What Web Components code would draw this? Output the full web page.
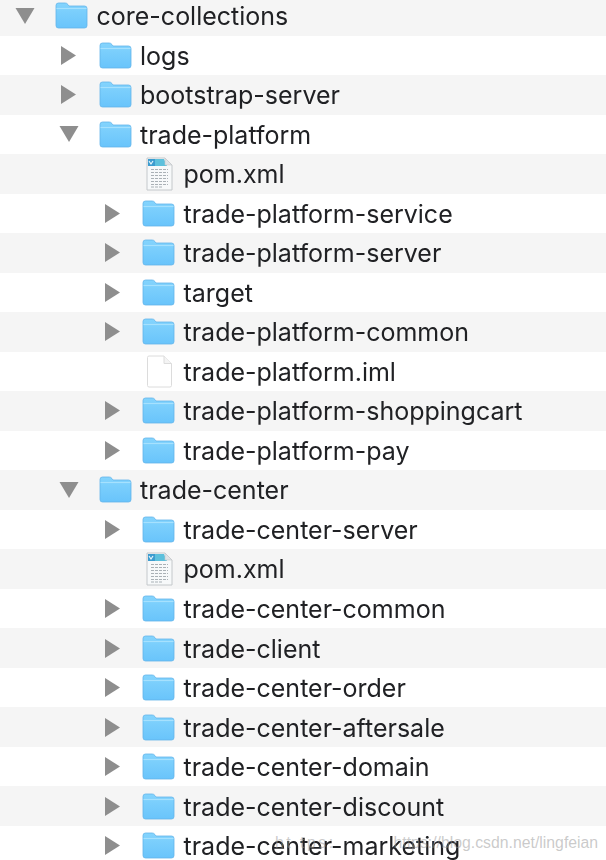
<!DOCTYPE html>
<html>
<head>
<meta charset="utf-8">
<title>core-collections</title>
<style>
    html, body { margin: 0; padding: 0; background: #fff; height: 860px; overflow: hidden; }
</style>
</head>
<body>
<file-tree>
    <tree-row level="0" kind="folder" state="open">core-collections</tree-row>
    <tree-row level="1" kind="folder" state="closed">logs</tree-row>
    <tree-row level="1" kind="folder" state="closed">bootstrap-server</tree-row>
    <tree-row level="1" kind="folder" state="open">trade-platform</tree-row>
    <tree-row level="2" kind="xml">pom.xml</tree-row>
    <tree-row level="2" kind="folder" state="closed">trade-platform-service</tree-row>
    <tree-row level="2" kind="folder" state="closed">trade-platform-server</tree-row>
    <tree-row level="2" kind="folder" state="closed">target</tree-row>
    <tree-row level="2" kind="folder" state="closed">trade-platform-common</tree-row>
    <tree-row level="2" kind="blank">trade-platform.iml</tree-row>
    <tree-row level="2" kind="folder" state="closed">trade-platform-shoppingcart</tree-row>
    <tree-row level="2" kind="folder" state="closed">trade-platform-pay</tree-row>
    <tree-row level="1" kind="folder" state="open">trade-center</tree-row>
    <tree-row level="2" kind="folder" state="closed">trade-center-server</tree-row>
    <tree-row level="2" kind="xml">pom.xml</tree-row>
    <tree-row level="2" kind="folder" state="closed">trade-center-common</tree-row>
    <tree-row level="2" kind="folder" state="closed">trade-client</tree-row>
    <tree-row level="2" kind="folder" state="closed">trade-center-order</tree-row>
    <tree-row level="2" kind="folder" state="closed">trade-center-aftersale</tree-row>
    <tree-row level="2" kind="folder" state="closed">trade-center-domain</tree-row>
    <tree-row level="2" kind="folder" state="closed">trade-center-discount</tree-row>
    <tree-row level="2" kind="folder" state="closed">trade-center-marketing</tree-row>
    <water-mark></water-mark>
</file-tree>

<script>
const ICONS = {
    folder: `<svg width="33" height="27" viewBox="0 0 33 27">
        <defs><linearGradient id="fg" x1="0" y1="0" x2="0" y2="1">
            <stop offset="0" stop-color="#84d4fd"/><stop offset="1" stop-color="#69c4fb"/>
        </linearGradient></defs>
        <path d="M1 3.5Q1 1 3.5 1H10Q12 1 13 2.6L14 4H29.5Q32 4 32 6.5V23.5Q32 26 29.5 26H3.5Q1 26 1 23.5Z" fill="url(#fg)" stroke="#62b4ea" stroke-width=".8"/>
        <path d="M1.5 6.5H31.5" stroke="#a6e1fe" stroke-width="1.2"/>
    </svg>`,
    xml: `<svg width="27" height="34" viewBox="0 0 27 34">
        <path d="M1 1H19L26 8V33H1Z" fill="#f7f9fa" stroke="#c4c8cb" stroke-width="1"/>
        <path d="M2 2H18V9H2Z" fill="#3c9ccf"/>
        <path d="M9 2H18L21 9H9Z" fill="#5cc0dc"/>
        <path d="M3 4L5 7L7 4" fill="none" stroke="#e6f4fa" stroke-width="1.2"/>
        <path d="M19 1V8H26Z" fill="#dfe3e6" stroke="#c4c8cb" stroke-width=".6"/>
        <path d="M5 12.5H22M5 15.5H22M5 18.5H22M5 21.5H22M5 24.5H22M5 27.5H22M5 30H16" stroke="#aab1b6" stroke-width="1.1" stroke-dasharray="3 1"/>
    </svg>`,
    blank: `<svg width="27" height="33" viewBox="0 0 27 33">
        <path d="M1.5 2.5Q1.5 1 3 1H18L25.5 8.5V30.5Q25.5 32 24 32H3Q1.5 32 1.5 30.5Z" fill="#fff" stroke="#dcdcdc" stroke-width="1"/>
        <path d="M18 1V8.5H25.5" fill="#f4f4f4" stroke="#dcdcdc" stroke-width="1"/>
    </svg>`
};

class FileTree extends HTMLElement {
    constructor() {
        super();
        this.attachShadow({ mode: 'open' });
    }

    connectedCallback() {
        this.shadowRoot.innerHTML = `
            <style>
                :host {
                    display: block;
                    position: relative;
                    height: 860px;
                    overflow: hidden;
                    font-family: Inter, "Liberation Sans", sans-serif;
                    color: #202124;
                }
                .rows { display: flex; flex-direction: column; margin-top: -4px; }
            </style>
            <div class="rows"><slot></slot></div>
        `;
    }
}

class TreeRow extends HTMLElement {
    constructor() {
        super();
        this.attachShadow({ mode: 'open' });
    }

    connectedCallback() {
        const level = Number(this.getAttribute('level') || 0);
        const kind = this.getAttribute('kind') || 'folder';
        const state = this.getAttribute('state');
        let arrow = '';
        if (state === 'open') {
            arrow = '<svg width="20" height="16" viewBox="0 0 20 16"><path d="M0.5 0H19.5L10 16Z" fill="#8e8e8e"/></svg>';
        } else if (state === 'closed') {
            arrow = '<svg width="15" height="19" viewBox="0 0 15 19"><path d="M0 0L15 9.5L0 19Z" fill="#8e8e8e"/></svg>';
        }
        this.shadowRoot.innerHTML = `
            <style>
                :host {
                    display: flex;
                    align-items: center;
                    height: 39.53px;
                    flex: none;
                    background: #fff;
                }
                :host(:nth-child(odd)) { background: #f5f5f5; }
                .arrow { width: 45px; height: 100%; display: flex; align-items: center; justify-content: center; flex: none; box-sizing: border-box; padding-right: 15px; }
                .icon { width: 41.5px; flex: none; display: flex; align-items: center; justify-content: flex-start; filter: blur(.3px); }
                .icon.file { padding-left: 4px; width: 37.5px; }
                .name { font-size: 25px; white-space: nowrap; line-height: 1; position: relative; top: 1px; filter: blur(.3px); }
            </style>
            <div class="arrow">${arrow}</div>
            <div class="icon ${kind === 'folder' ? '' : 'file'}">${ICONS[kind]}</div>
            <span class="name"><slot></slot></span>
        `;
        this.style.paddingLeft = (10 + level * 43.5) + 'px';
    }
}

class WaterMark extends HTMLElement {
    constructor() {
        super();
        this.attachShadow({ mode: 'open' });
    }

    connectedCallback() {
        this.shadowRoot.innerHTML = `
            <style>
                :host {
                    position: absolute;
                    left: 275px;
                    top: 833px;
                    font-family: "Liberation Sans", sans-serif;
                    font-size: 15.8px;
                    line-height: 20px;
                    white-space: nowrap;
                    color: rgba(150, 150, 150, .5);
                }
                .first { letter-spacing: 2.5px; }
                .gap { margin-left: 58px; }
            </style>
            <span class="first">ht tps:</span><span class="gap">https://blog.csdn.net/lingfeian</span>
        `;
    }
}

customElements.define('file-tree', FileTree);
customElements.define('tree-row', TreeRow);
customElements.define('water-mark', WaterMark);
</script>
</body>
</html>
